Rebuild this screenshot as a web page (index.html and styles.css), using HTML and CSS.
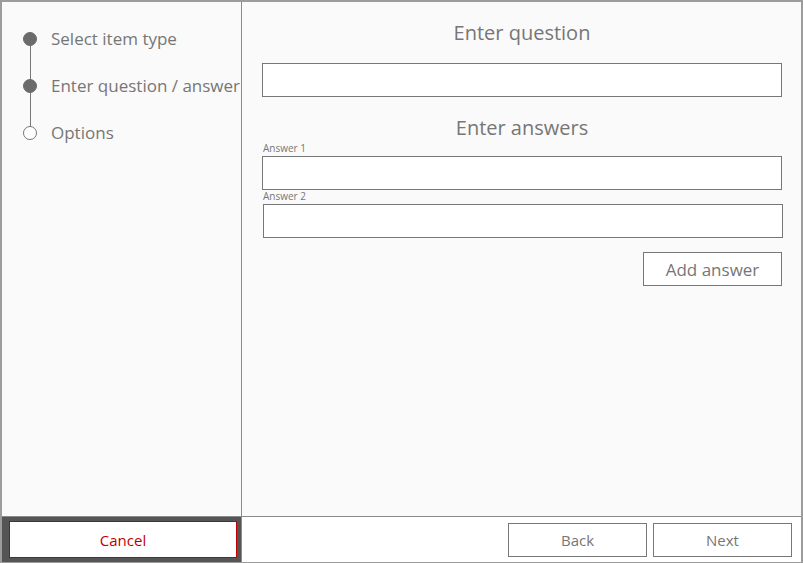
FILE: index.html
```html
<!DOCTYPE html>
<html>
<head>
<meta charset="utf-8">
<link rel="stylesheet" href="styles.css">
</head>
<body>
<div class="window">
  <aside class="sidebar">
    <ol class="steps">
      <li class="step done"><span class="dot"></span><span class="label">Select item type</span></li>
      <li class="step done"><span class="dot"></span><span class="label">Enter question / answer</span></li>
      <li class="step"><span class="dot"></span><span class="label">Options</span></li>
    </ol>
  </aside>
  <main class="content">
    <h2 class="title">Enter question</h2>
    <div class="field question"></div>
    <h2 class="title answers-title">Enter answers</h2>
    <div class="answer">
      <div class="small-label">Answer 1</div>
      <div class="field"></div>
    </div>
    <div class="answer">
      <div class="small-label">Answer 2</div>
      <div class="field shifted"></div>
    </div>
    <div class="add-row"><button class="btn add">Add answer</button></div>
  </main>
  <div class="side-footer"><button class="cancel">Cancel</button></div>
  <div class="main-footer">
    <button class="btn nav">Back</button>
    <button class="btn nav">Next</button>
  </div>
</div>
</body>
</html>
```
FILE: styles.css
```css
html, body {
  margin: 0;
  padding: 0;
  background: #ffffff;
}
body {
  font-family: "Open Sans", "Noto Sans", "Liberation Sans", sans-serif;
  color: #767676;
}
.window {
  width: 803px;
  height: 563px;
  box-sizing: border-box;
  border: 2px solid #9c9c9c;
  border-bottom-width: 1px;
  display: grid;
  grid-template-columns: 240px 1fr;
  grid-template-rows: 1fr 46px;
  background: #fafafa;
}
.sidebar {
  border-right: 1px solid #8a8a8a;
  padding: 13px 0 0 21px;
  background: #fafafa;
}
.steps {
  list-style: none;
  margin: 0;
  padding: 0;
  display: flex;
  flex-direction: column;
}
.step {
  position: relative;
  height: 47px;
  display: flex;
  align-items: center;
  gap: 14px;
  font-size: 17px;
  white-space: nowrap;
}
.step:not(:last-child)::after {
  content: "";
  position: absolute;
  left: 7px;
  top: 23px;
  height: 47px;
  width: 1px;
  background: #777;
}
.dot {
  width: 14px;
  height: 14px;
  box-sizing: border-box;
  border-radius: 50%;
  border: 1px solid #777;
  background: #fff;
  position: relative;
  z-index: 1;
  flex: none;
}
.done .dot {
  background: #6b6b6b;
  border-color: #6b6b6b;
}
.label {
  color: #767676;
}
.content {
  padding: 17px 19px 0 20px;
  display: flex;
  flex-direction: column;
  background: #fafafa;
}
.title {
  margin: 0;
  font-weight: 400;
  font-size: 20px;
  line-height: 28px;
  text-align: center;
  color: #767676;
}
.field {
  height: 34px;
  box-sizing: border-box;
  border: 1px solid #777;
  background: #fff;
}
.question {
  margin-top: 16px;
}
.answers-title {
  margin-top: 17px;
}
.answer {
  display: flex;
  flex-direction: column;
}
.small-label {
  font-size: 10px;
  line-height: 12px;
  height: 14px;
  padding-left: 1px;
  color: #777;
}
.field.shifted {
  margin-left: 1px;
  margin-right: -1px;
}
.add-row {
  display: flex;
  justify-content: flex-end;
  margin-top: 14px;
}
.btn {
  font-family: inherit;
  width: 139px;
  height: 34px;
  box-sizing: border-box;
  border: 1px solid #777;
  background: #fff;
  color: #767676;
  font-size: 17px;
  padding: 0;
}
.side-footer {
  background: #555555;
  border-top: 1px solid #8a8a8a;
  border-right: 1px solid #8a8a8a;
  padding: 4px 4px 4px 7px;
  display: flex;
}
.cancel {
  flex: 1;
  font-family: inherit;
  font-size: 15px;
  color: #c00000;
  background: #fff;
  border: 1px solid #c00000;
  padding: 0;
  height: 37px;
}
.main-footer {
  background: #fff;
  border-top: 1px solid #8a8a8a;
  display: flex;
  justify-content: flex-end;
  align-items: flex-start;
  gap: 6px;
  padding: 6px 9px 0 0;
}
.nav {
  font-size: 15px;
}
```
